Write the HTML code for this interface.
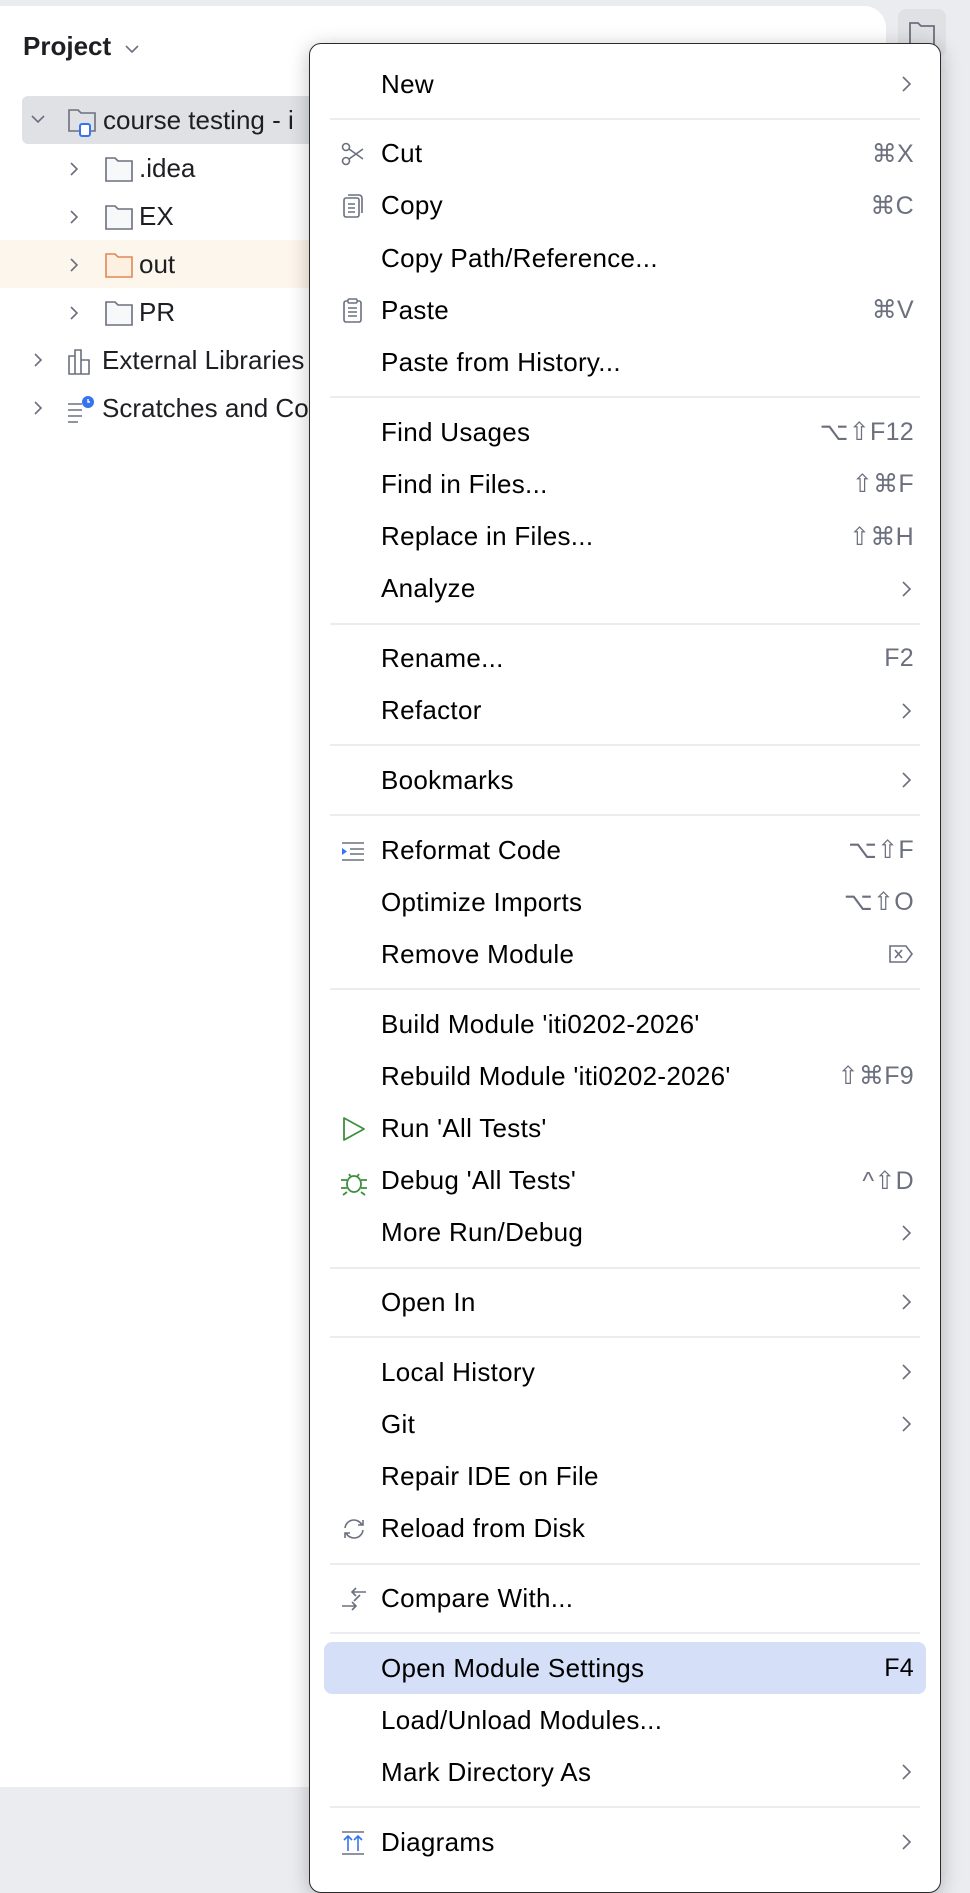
<!DOCTYPE html>
<html><head><meta charset="utf-8"><style>
*{margin:0;padding:0;box-sizing:border-box}
body{width:970px;height:1878px;background:#ebecf0;position:relative;overflow:hidden;font-family:"Liberation Sans",sans-serif;color:#000}
.panel{position:absolute;left:0;top:6px;width:886px;height:1781px;background:#fff;border-radius:0 22px 22px 0}
.hdr{position:absolute;left:23px;top:31px;font-size:26px;font-weight:bold;color:#1e1f22}
.row{position:absolute;height:47px;display:flex;align-items:center;font-size:26px;color:#1e1f22;white-space:nowrap}
.menu{position:absolute;left:309px;top:43px;width:632px;height:1850px;background:#fff;border:1.5px solid #2b2b2b;border-radius:12px;box-shadow:0 4px 20px rgba(0,0,0,.25);padding-top:14px;overflow:hidden}
.it{height:52.2px;position:relative;display:flex;align-items:center;font-size:26px;letter-spacing:0.3px}
.it .t{position:absolute;left:71px}
.it .k{position:absolute;right:26px;color:#6c707e;font-size:25px}
.it .ch{position:absolute;right:28px;top:17px}
.it .ic{position:absolute;left:30px;top:13px}
.sep{height:17.5px;position:relative}
.sep:after{content:"";position:absolute;left:20px;right:20px;top:7.7px;height:2px;background:#ebecf0}
.hl{background:#d5e0f8;border-radius:8px;margin:0 14px 0 14px}
.hl .t{left:57px}.hl .k{right:12px;color:#000}
</style></head><body>
<div class="panel"></div>
<div class="hdr">Project <svg width="16" height="12" viewBox="0 0 16 12" style="margin-left:6px"><path d="M2 3l6 6 6-6" fill="none" stroke="#6c707e" stroke-width="1.6"/></svg></div>
<div style="position:absolute;left:22px;top:96px;width:300px;height:48px;background:#dfe1e5;border-radius:6px"></div>
<div style="position:absolute;left:0;top:240px;width:320px;height:48px;background:#fdf6ec"></div>
<svg style="position:absolute;left:30px;top:113px" width="16" height="14"><path d="M2 3l6 6 6-6" fill="none" stroke="#6c707e" stroke-width="1.6"/></svg>
<div class="row" style="left:66px;top:97px"><svg width="34" height="34" viewBox="0 0 34 34"><path d="M3 6h9l3 3h14v18H3z" fill="none" stroke="#6c707e" stroke-width="1.6"/><rect x="14" y="20" width="10" height="12" rx="2" fill="#fff" stroke="#3574f0" stroke-width="2"/></svg><span style="margin-left:3px">course testing - i</span></div>
<svg style="position:absolute;left:68px;top:161px" width="12" height="16"><path d="M3 2l6 6-6 6" fill="none" stroke="#6c707e" stroke-width="1.6"/></svg>
<svg style="position:absolute;left:68px;top:209px" width="12" height="16"><path d="M3 2l6 6-6 6" fill="none" stroke="#6c707e" stroke-width="1.6"/></svg>
<svg style="position:absolute;left:68px;top:257px" width="12" height="16"><path d="M3 2l6 6-6 6" fill="none" stroke="#6c707e" stroke-width="1.6"/></svg>
<svg style="position:absolute;left:68px;top:305px" width="12" height="16"><path d="M3 2l6 6-6 6" fill="none" stroke="#6c707e" stroke-width="1.6"/></svg>
<svg style="position:absolute;left:32px;top:352px" width="12" height="16"><path d="M3 2l6 6-6 6" fill="none" stroke="#6c707e" stroke-width="1.6"/></svg>
<svg style="position:absolute;left:32px;top:400px" width="12" height="16"><path d="M3 2l6 6-6 6" fill="none" stroke="#6c707e" stroke-width="1.6"/></svg>
<div class="row" style="left:104px;top:145px"><svg width="32" height="30"><path d="M2 4h9l3 3h14v20H2z" fill="#f7f8fa" stroke="#6c707e" stroke-width="1.6"/></svg><span style="margin-left:3px">.idea</span></div>
<div class="row" style="left:104px;top:193px"><svg width="32" height="30"><path d="M2 4h9l3 3h14v20H2z" fill="#f7f8fa" stroke="#6c707e" stroke-width="1.6"/></svg><span style="margin-left:3px">EX</span></div>
<div class="row" style="left:104px;top:241px"><svg width="32" height="30"><path d="M2 4h9l3 3h14v20H2z" fill="#fdf0e0" stroke="#e08855" stroke-width="1.6"/></svg><span style="margin-left:3px">out</span></div>
<div class="row" style="left:104px;top:289px"><svg width="32" height="30"><path d="M2 4h9l3 3h14v20H2z" fill="#f7f8fa" stroke="#6c707e" stroke-width="1.6"/></svg><span style="margin-left:3px">PR</span></div>
<div class="row" style="left:66px;top:337px"><svg width="32" height="30"><path d="M3 10h6v18H3zM9 4h6v24H9zM15 14h8v14h-8z" fill="none" stroke="#6c707e" stroke-width="1.6"/></svg><span style="margin-left:4px">External Libraries</span></div>
<div class="row" style="left:66px;top:385px"><svg width="32" height="30"><path d="M2 10h14M2 16h14M2 22h14M2 28h10" stroke="#6c707e" stroke-width="1.6"/><circle cx="22" cy="8" r="6" fill="#3574f0"/><path d="M22 5v3h2" stroke="#fff" stroke-width="1.4" fill="none"/></svg><span style="margin-left:4px">Scratches and Co</span></div>
<div style="position:absolute;left:898px;top:9px;width:48px;height:48px;background:#dfe1e5;border-radius:8px"><svg width="48" height="48"><path d="M12 14h8l3 3h13v20H12z" fill="none" stroke="#6c707e" stroke-width="1.8"/></svg></div>

<div class="menu">
<div class="it"><span class="t">New</span><svg class="ch" width="12" height="18"><path d="M3 2l7 7-7 7" fill="none" stroke="#6c707e" stroke-width="1.6"/></svg></div>
<div class="sep"></div>
<div class="it"><svg class="ic" width="26" height="26"><circle cx="6" cy="6" r="3.5" fill="none" stroke="#6c707e" stroke-width="1.6"/><circle cx="6" cy="20" r="3.5" fill="none" stroke="#6c707e" stroke-width="1.6"/><path d="M9 8l14 10M9 18l14-10" stroke="#6c707e" stroke-width="1.6"/></svg><span class="t">Cut</span><span class="k">⌘X</span></div>
<div class="it"><svg class="ic" width="26" height="26"><rect x="4" y="5" width="15" height="19" rx="2" fill="none" stroke="#6c707e" stroke-width="1.6"/><path d="M8 2h11a3 3 0 0 1 3 3v15M8 11h7M8 15h7M8 19h7" fill="none" stroke="#6c707e" stroke-width="1.6"/></svg><span class="t">Copy</span><span class="k">⌘C</span></div>
<div class="it"><span class="t">Copy Path/Reference...</span></div>
<div class="it"><svg class="ic" width="26" height="26"><rect x="4" y="4" width="17" height="21" rx="2" fill="none" stroke="#6c707e" stroke-width="1.6"/><rect x="8" y="2" width="9" height="4" rx="1" fill="#fff" stroke="#6c707e" stroke-width="1.4"/><path d="M8 11h9M8 15h9M8 19h9" stroke="#6c707e" stroke-width="1.6"/></svg><span class="t">Paste</span><span class="k">⌘V</span></div>
<div class="it"><span class="t">Paste from History...</span></div>
<div class="sep"></div>
<div class="it"><span class="t">Find Usages</span><span class="k">⌥⇧F12</span></div>
<div class="it"><span class="t">Find in Files...</span><span class="k">⇧⌘F</span></div>
<div class="it"><span class="t">Replace in Files...</span><span class="k">⇧⌘H</span></div>
<div class="it"><span class="t">Analyze</span><svg class="ch" width="12" height="18"><path d="M3 2l7 7-7 7" fill="none" stroke="#6c707e" stroke-width="1.6"/></svg></div>
<div class="sep"></div>
<div class="it"><span class="t">Rename...</span><span class="k">F2</span></div>
<div class="it"><span class="t">Refactor</span><svg class="ch" width="12" height="18"><path d="M3 2l7 7-7 7" fill="none" stroke="#6c707e" stroke-width="1.6"/></svg></div>
<div class="sep"></div>
<div class="it"><span class="t">Bookmarks</span><svg class="ch" width="12" height="18"><path d="M3 2l7 7-7 7" fill="none" stroke="#6c707e" stroke-width="1.6"/></svg></div>
<div class="sep"></div>
<div class="it"><svg class="ic" width="26" height="26"><path d="M2 6h22M10 12h14M10 17h14M2 23h22" stroke="#6c707e" stroke-width="1.6"/><path d="M2 11l5 3.5-5 3.5z" fill="#3574f0"/></svg><span class="t">Reformat Code</span><span class="k">⌥⇧F</span></div>
<div class="it"><span class="t">Optimize Imports</span><span class="k">⌥⇧O</span></div>
<div class="it"><span class="t">Remove Module</span><svg style="position:absolute;right:26px;top:16px" width="26" height="20"><path d="M2 2h16l6 8-6 8H2z M7 6l7 8M14 6l-7 8" fill="none" stroke="#6c707e" stroke-width="1.6"/></svg></div>
<div class="sep"></div>
<div class="it"><span class="t">Build Module 'iti0202-2026'</span></div>
<div class="it"><span class="t">Rebuild Module 'iti0202-2026'</span><span class="k">⇧⌘F9</span></div>
<div class="it"><svg class="ic" width="26" height="28"><path d="M4 3l20 11-20 11z" fill="none" stroke="#3f8f3f" stroke-width="1.8" stroke-linejoin="round"/></svg><span class="t">Run 'All Tests'</span></div>
<div class="it"><svg class="ic" width="28" height="28"><ellipse cx="14" cy="16" rx="7" ry="8" fill="none" stroke="#3f8f3f" stroke-width="1.8"/><path d="M9 6l2 3M19 6l-2 3M1 12h6M21 12h6M1 20h6M21 20h6M3 27l4-3M25 27l-4-3" stroke="#3f8f3f" stroke-width="1.8"/></svg><span class="t">Debug 'All Tests'</span><span class="k">^⇧D</span></div>
<div class="it"><span class="t">More Run/Debug</span><svg class="ch" width="12" height="18"><path d="M3 2l7 7-7 7" fill="none" stroke="#6c707e" stroke-width="1.6"/></svg></div>
<div class="sep"></div>
<div class="it"><span class="t">Open In</span><svg class="ch" width="12" height="18"><path d="M3 2l7 7-7 7" fill="none" stroke="#6c707e" stroke-width="1.6"/></svg></div>
<div class="sep"></div>
<div class="it"><span class="t">Local History</span><svg class="ch" width="12" height="18"><path d="M3 2l7 7-7 7" fill="none" stroke="#6c707e" stroke-width="1.6"/></svg></div>
<div class="it"><span class="t">Git</span><svg class="ch" width="12" height="18"><path d="M3 2l7 7-7 7" fill="none" stroke="#6c707e" stroke-width="1.6"/></svg></div>
<div class="it"><span class="t">Repair IDE on File</span></div>
<div class="it"><svg class="ic" width="28" height="26"><path d="M5 12a9 9 0 0 1 17-3M23 14a9 9 0 0 1-17 3M18 9h5V4M10 17H5v5" fill="none" stroke="#6c707e" stroke-width="1.6"/></svg><span class="t">Reload from Disk</span></div>
<div class="sep"></div>
<div class="it"><svg class="ic" width="28" height="28"><path d="M12 7h14M16 3l-4 4 4 4M2 21h14M12 17l4 4-4 4M14 16l6-6" fill="none" stroke="#6c707e" stroke-width="1.6"/></svg><span class="t">Compare With...</span></div>
<div class="sep"></div>
<div class="it hl"><span class="t">Open Module Settings</span><span class="k">F4</span></div>
<div class="it"><span class="t">Load/Unload Modules...</span></div>
<div class="it"><span class="t">Mark Directory As</span><svg class="ch" width="12" height="18"><path d="M3 2l7 7-7 7" fill="none" stroke="#6c707e" stroke-width="1.6"/></svg></div>
<div class="sep"></div>
<div class="it"><svg class="ic" width="26" height="28"><path d="M2 3h22M2 25h22" stroke="#6c707e" stroke-width="1.6"/><path d="M8 22V8M4 11l4-4 4 4M18 22V8M14 11l4-4 4 4" fill="none" stroke="#3574f0" stroke-width="1.6"/></svg><span class="t">Diagrams</span><svg class="ch" width="12" height="18"><path d="M3 2l7 7-7 7" fill="none" stroke="#6c707e" stroke-width="1.6"/></svg></div>
</div>
</body></html>
